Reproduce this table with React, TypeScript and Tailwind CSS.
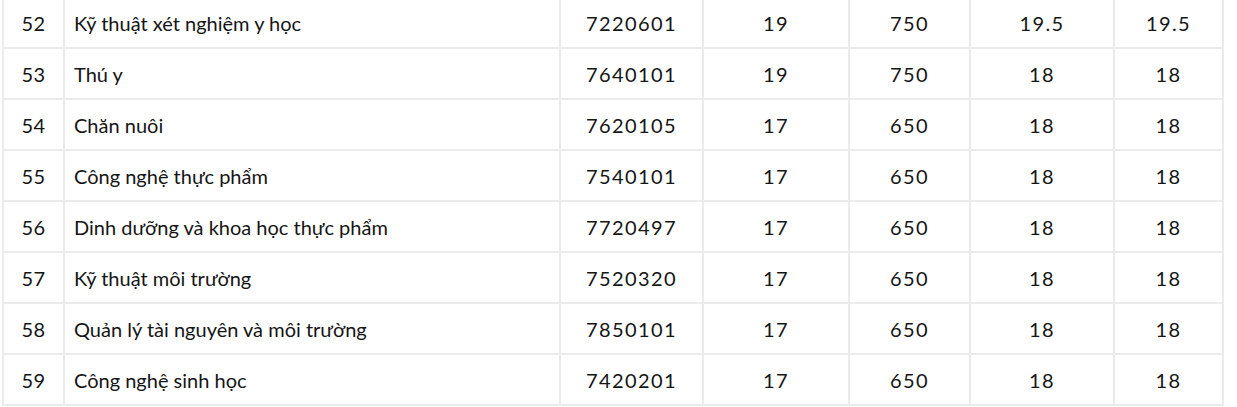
import React from "react";

const rows: [string, string, string, string, string, string, string][] = [
  ["52", "Kỹ thuật xét nghiệm y học", "7220601", "19", "750", "19.5", "19.5"],
  ["53", "Thú y", "7640101", "19", "750", "18", "18"],
  ["54", "Chăn nuôi", "7620105", "17", "650", "18", "18"],
  ["55", "Công nghệ thực phẩm", "7540101", "17", "650", "18", "18"],
  ["56", "Dinh dưỡng và khoa học thực phẩm", "7720497", "17", "650", "18", "18"],
  ["57", "Kỹ thuật môi trường", "7520320", "17", "650", "18", "18"],
  ["58", "Quản lý tài nguyên và môi trường", "7850101", "17", "650", "18", "18"],
  ["59", "Công nghệ sinh học", "7420201", "17", "650", "18", "18"],
];

export default function App() {
  return (
    <div className="w-[1237px] h-[407px] overflow-hidden bg-white pl-[2px]">
      <div
        className="mt-[-4px] w-[1222px] grid grid-cols-[61px_496px_143px_146px_121px_144px_109px] border-r-2 border-b-2 border-[#ebebeb] text-[20px] text-[#151515]"
        style={{ fontFamily: "Lato, 'Noto Sans', sans-serif" }}
      >
        {rows.map((r) => (
          <React.Fragment key={r[0]}>
            {r.map((c, i) => (
              <div
                key={i}
                className={`h-[51px] border-l-2 border-t-2 border-[#ebebeb] flex items-center ${
                  i === 1
                    ? "justify-start pl-[9px]"
                    : i === 0
                    ? "justify-center tracking-[0.5px]"
                    : "justify-center tracking-[1.4px]"
                }`}
              >
                {c}
              </div>
            ))}
          </React.Fragment>
        ))}
      </div>
    </div>
  );
}
